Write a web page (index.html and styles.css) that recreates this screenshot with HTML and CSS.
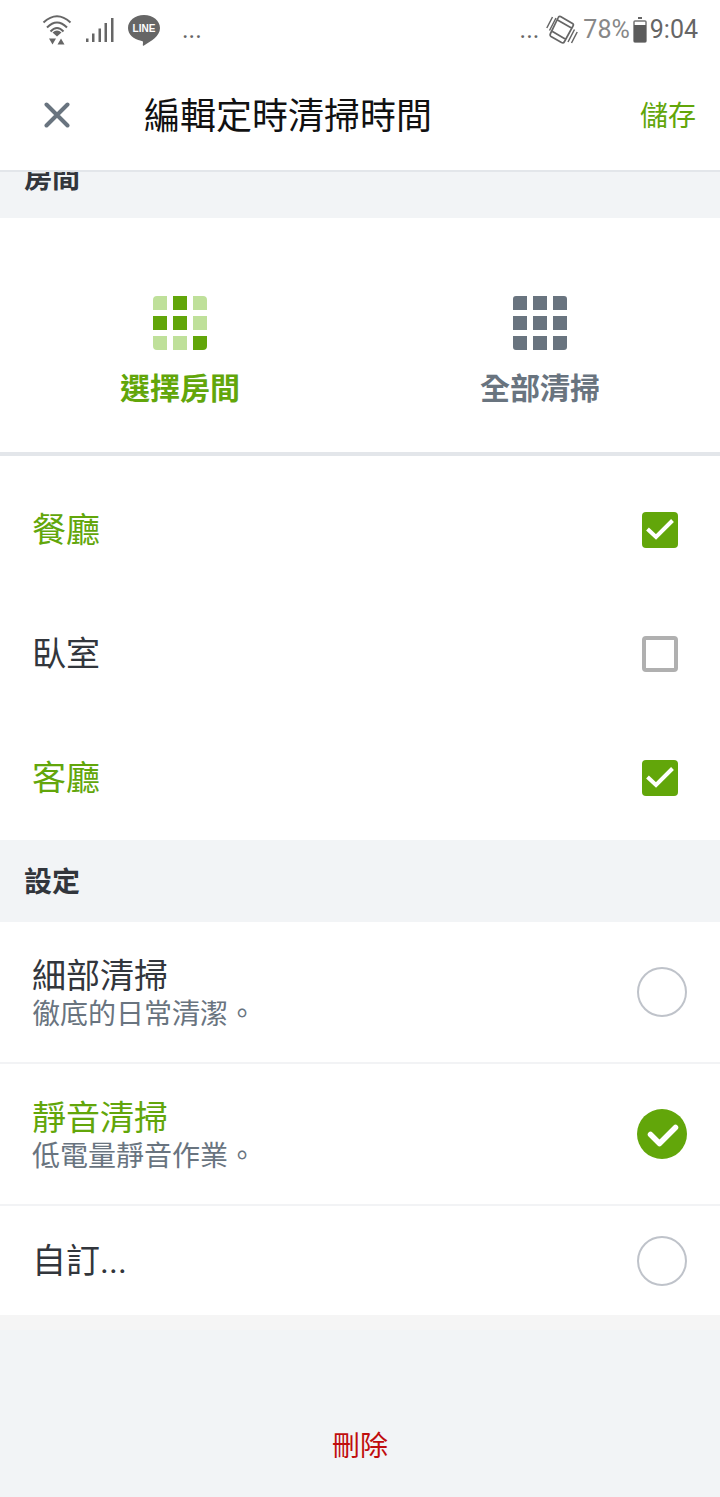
FILE: index.html
```html
<!DOCTYPE html>
<html lang="zh-Hant">
<head>
<meta charset="utf-8">
<meta name="viewport" content="width=device-width, initial-scale=1">
<title>編輯定時清掃時間</title>
<link rel="stylesheet" href="styles.css">
</head>
<body>
<div class="status-bar">
  <div class="status-left">
    <svg width="30" height="30" viewBox="0 0 30 30" fill="none" stroke="#666" stroke-width="2">
      <path d="M1.500 7.500Q15-5 28.500 7.500M5 12.500Q15 2.500 25 12.500M8.500 16.500Q15 9.500 21.500 16.500"/>
      <path d="M10.500 17.500Q15 13.500 19.500 17.500L15 21.500ZM7 23.500h7l-3.500 6ZM15.500 29.500h7l-3.500-6Z" fill="#666" stroke="none"/>
    </svg>
    <svg width="28" height="26" viewBox="0 0 28 26" fill="#666">
      <path d="M0 21.500h2.500V25H0zM6 16.500h2.500V25H6zM12.500 11.500H15V25h-2.500zM18.500 6H21v19h-2.500zM25 1h2.500v24H25z"/>
    </svg>
    <svg class="line-logo" width="32" height="31" viewBox="0 0 32 31">
      <path d="M16 0C7 0 0 5.700 0 13c0 6.500 5.500 11.500 13 12.700 2 .3 2.300.8 1.800 4.300 0 .7.400.9 1.200.4C23 26.300 32 21 32 13 32 5.700 25 0 16 0Z" fill="#666"/>
      <text x="16" y="17" text-anchor="middle" class="line-text">LINE</text>
    </svg>
    <span>...</span>
  </div>
  <div class="status-right">
    <span class="more">...</span>
    <svg class="vibrate" width="32" height="30" viewBox="0 0 32 30" fill="none" stroke="#666">
      <path d="M14.500 1.500 26.500 8.500Q28 9.500 27 11L18.500 26.500Q17.500 28.500 15.500 27.500L5 21.500Q3.500 20.500 4.500 18.500L12 3Q13 .8 14.500 1.500ZM11.500 5 25.500 13M6.500 16.500 20 24.500" stroke-width="1.700"/>
      <path d="M.8 13 6.500 2M3.500 15.500 10 3M31.200 17 25.500 28M28.500 14.500 22 27" stroke-width="1.500"/>
    </svg>
    <span class="battery-level">78%</span>
    <svg width="14" height="26" viewBox="0 0 14 26">
      <path d="M5 1h4" stroke="#666" stroke-width="2"/>
      <rect x="1" y="4" width="12" height="21" rx="1" fill="none" stroke="#777" stroke-width="1.500"/>
      <path d="M1 8h12v17H1z" fill="#5c5c5c"/>
    </svg>
    <span>9:04</span>
  </div>
</div>

<header class="app-bar">
  <button type="button" class="close" aria-label="關閉">
    <svg width="26" height="26" viewBox="0 0 26 26" fill="none" stroke="#69747f" stroke-width="4" stroke-linecap="round"><path d="M2.500 2.500l21 21M23.500 2.500l-21 21"/></svg>
  </button>
  <h1>編輯定時清掃時間</h1>
  <button type="button" class="save">儲存</button>
</header>

<main>
  <h2 class="section-title scrolled">房間</h2>
  <div class="modes">
    <button type="button" class="mode active" aria-pressed="true">
      <svg width="54" height="54" viewBox="0 0 54 54" fill="#62a60a">
        <g fill="#bfe09a">
          <path d="M4 0h10v14H0V4Q0 0 4 0ZM40 0h10q4 0 4 4v10H40ZM40 20h14v14H40ZM0 40h14v14H4q-4 0-4-4ZM20 40h14v14H20Z"/>
        </g>
        <path d="M20 0h14v14H20ZM0 20h14v14H0ZM20 20h14v14H20ZM40 40h14v10q0 4-4 4H40Z"/>
      </svg>
      <span>選擇房間</span>
    </button>
    <button type="button" class="mode" aria-pressed="false">
      <svg width="54" height="54" viewBox="0 0 54 54" fill="#69747f">
        <path d="M3 0h11v14H0V3Q0 0 3 0ZM20 0h14v14H20ZM40 0h11q3 0 3 3v11H40ZM0 20h14v14H0ZM20 20h14v14H20ZM40 20h14v14H40ZM0 40h14v14H3q-3 0-3-3ZM20 40h14v14H20ZM40 40h14v11q0 3-3 3H40Z"/>
      </svg>
      <span>全部清掃</span>
    </button>
  </div>

  <div class="rooms">
    <label class="room"><span>餐廳</span><input type="checkbox" checked></label>
    <label class="room"><span>臥室</span><input type="checkbox"></label>
    <label class="room"><span>客廳</span><input type="checkbox" checked></label>
  </div>

  <h2 class="section-title">設定</h2>
  <div class="settings">
    <label class="setting">
      <span class="setting-text"><span class="name">細部清掃</span><span class="note">徹底的日常清潔。</span></span>
      <input type="radio" name="setting">
    </label>
    <label class="setting">
      <span class="setting-text"><span class="name">靜音清掃</span><span class="note">低電量靜音作業。</span></span>
      <input type="radio" name="setting" checked>
    </label>
    <label class="setting short">
      <span class="setting-text"><span class="name">自訂...</span></span>
      <input type="radio" name="setting">
    </label>
  </div>
</main>

<footer>
  <button type="button" class="delete">刪除</button>
</footer>
</body>
</html>
```
FILE: styles.css
```css
* {
  box-sizing: border-box;
}

body {
  margin: 0;
  background: #f2f4f6;
  color: #32363c;
  font-family: Roboto, "Noto Sans CJK TC", sans-serif;
}

button {
  padding: 0;
  border: 0;
  background: none;
  font: inherit;
  cursor: pointer;
}

svg {
  display: block;
  flex: none;
}

input {
  appearance: none;
  flex: none;
  margin: 0;
}

.status-bar {
  display: flex;
  justify-content: space-between;
  align-items: center;
  height: 60px;
  padding: 0 22px 0 42px;
  background: #fff;
  color: #666;
  font-size: 25px;
  line-height: 30px;
}

.status-left {
  display: flex;
  align-items: center;
  gap: 14px;
}

.status-left span {
  padding-left: 8px;
}

.status-right {
  display: flex;
  align-items: center;
  gap: 3px;
}

.more {
  padding-right: 4px;
}

.vibrate {
  overflow: visible;
}

.battery-level {
  padding-left: 2px;
  color: #888;
}

.line-text {
  fill: #fff;
  font: bold 10px "Liberation Sans", sans-serif;
}

.app-bar {
  position: relative;
  z-index: 1;
  display: flex;
  align-items: center;
  height: 112px;
  padding: 0 24px 0 44px;
  border-bottom: 2px solid #e3e6ea;
  background: #fff;
}

.app-bar h1 {
  flex: 1;
  margin: 0 0 0 74px;
  padding-top: 4px;
  color: #111;
  font-size: 36px;
  font-weight: 400;
  line-height: 54px;
}

.save {
  padding-top: 4px;
  color: #62a60a;
  font-size: 28px;
  line-height: 42px;
}

.section-title {
  margin: 0;
  padding: 22px 24px 18px;
  background: #f2f4f6;
  font-size: 28px;
  font-weight: 700;
  line-height: 42px;
}

.scrolled {
  margin-top: -36px;
}

.modes {
  display: grid;
  grid-template-columns: 1fr 1fr;
  border-bottom: 4px solid #e3e6ea;
  background: #fff;
}

.mode {
  display: flex;
  flex-direction: column;
  align-items: center;
  gap: 17px;
  padding: 78px 0 41px;
  color: #69747f;
  font-size: 30px;
  font-weight: 700;
  line-height: 44px;
}

.mode.active {
  color: #62a60a;
}

.rooms {
  padding-top: 12px;
  background: #fff;
}

.room {
  display: flex;
  justify-content: space-between;
  align-items: center;
  height: 124px;
  padding: 0 42px 0 32px;
  font-size: 34px;
  line-height: 40px;
}

.room:has(:checked),
.setting:has(:checked) .name {
  color: #62a60a;
}

.room input {
  width: 36px;
  height: 36px;
  border: 4px solid #b0b0b0;
  border-radius: 4px;
}

.room input:checked {
  border: 0;
  background: #62a60a url("data:image/svg+xml,%3Csvg xmlns='http://www.w3.org/2000/svg' viewBox='0 0 36 36'%3E%3Cpath d='M5.500 17l8.500 8L30.500 8.500' fill='none' stroke='%23fff' stroke-width='4'/%3E%3C/svg%3E");
}

.setting {
  display: flex;
  justify-content: space-between;
  align-items: center;
  min-height: 142px;
  padding: 0 33px 0 32px;
  border-bottom: 2px solid #f2f3f5;
  background: #fff;
}

.setting.short {
  min-height: 109px;
  border-bottom: 0;
}

.setting-text {
  display: flex;
  flex-direction: column;
  padding-top: 6px;
}

.short .setting-text {
  padding-top: 0;
}

.name {
  font-size: 34px;
  line-height: 40px;
}

.note {
  color: #69747f;
  font-size: 28px;
  line-height: 38px;
}

.setting input {
  width: 50px;
  height: 50px;
  border: 2px solid #bfc3ca;
  border-radius: 50%;
}

.setting input:checked {
  border: 0;
  background: #62a60a url("data:image/svg+xml,%3Csvg xmlns='http://www.w3.org/2000/svg' viewBox='0 0 50 50'%3E%3Cpath d='M13.500 25.500l9 9L38.500 18.500' fill='none' stroke='%23fff' stroke-width='5.500' stroke-linejoin='round' stroke-linecap='round'/%3E%3C/svg%3E");
}

footer {
  display: flex;
  justify-content: center;
  padding: 96px 0 28px;
  border-top: 15px solid #f5f5f5;
}

.delete {
  color: #c00d0d;
  font-size: 28px;
  line-height: 42px;
}
```
